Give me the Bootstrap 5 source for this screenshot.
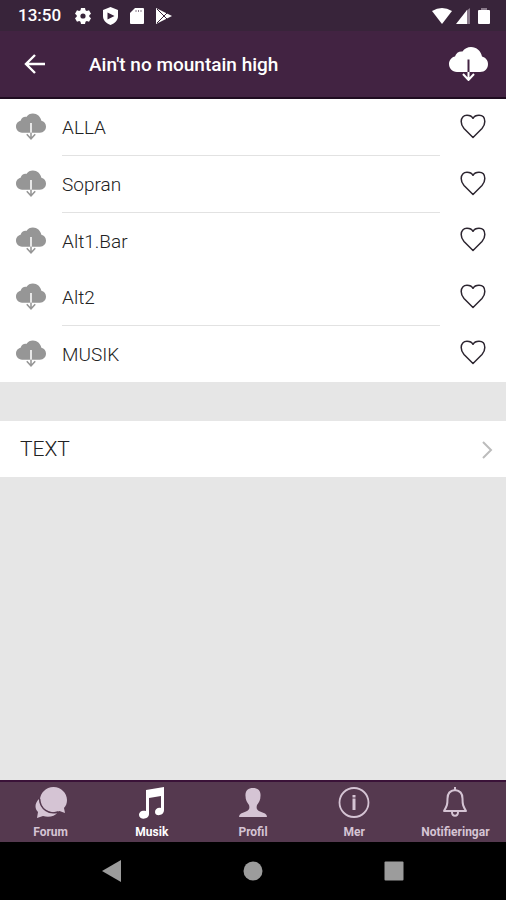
<!DOCTYPE html>
<html lang="sv">
<head>
<meta charset="utf-8">
<meta name="viewport" content="width=device-width, initial-scale=1">
<title>Ain't no mountain high</title>
<link href="https://cdn.jsdelivr.net/npm/bootstrap@5.3.0/dist/css/bootstrap.min.css" rel="stylesheet">
<style>
body { font-family: Roboto, "Liberation Sans", sans-serif; background: #e6e6e6; color: #222; }
svg { display: block; flex: none; }
button { border: 0; background: none; padding: 0; color: inherit; }
.status-bar { background: #38243a; height: 31px; padding: 0 16px 0 18px; font-size: 17px; font-weight: 500; }
.status-icons { gap: 12px; margin-left: 14px; }
.app-bar { background: #422342; height: 68px; padding: 0 18px 0 23px; border-bottom: 2px solid #1f0c20; }
.app-title { font-size: 19px; line-height: 24px; margin: 2px 0 0 42px; font-weight: 500; }
.voice { padding-left: 16px; padding-right: 18px; }
.voice-name { font-size: 19px; font-weight: 300; line-height: 24px; height: 54px; padding-top: 2px; margin-left: 16px; margin-right: 18px; box-sizing: content-box; }
.ruled { border-bottom: 1px solid #e2e2e2; }
.cloud-btn { color: #969696; --shaft: #fff; padding-bottom: 2px; }
.voice-heart { width: 30px; padding-bottom: 3px; }
.text-link { margin-top: 39px; height: 56px; padding: 2px 13px 0 20px; font-size: 21px; font-weight: 300; color: #222; }
.tab-bar { background: #55394f; height: 62px; border-top: 2px solid #3a1238; color: #d5c4d4; }
.tab-item { color: inherit; font-size: 12px; line-height: 14px; font-weight: 700; padding-top: 5px; flex: 1 1 0; min-width: 0; }
.tab-item svg { margin-bottom: 6px; }
.tab-item.current { color: #fff; }
.system-bar { background: #000; height: 58px; color: #9c9c9c; padding: 0 42px; }
.system-bar button { flex: 1 1 0; }
</style>
<script src="https://cdn.jsdelivr.net/npm/bootstrap@5.3.0/dist/js/bootstrap.bundle.min.js"></script>
</head>
<body>
<svg width="0" height="0" class="position-absolute" aria-hidden="true">
  <symbol id="cloud" viewBox="0 0 39 34">
    <path fill="currentColor" d="M8 25C3 25 0 21 0 17C0 13 3 10 6 9.500C7 6 10 4 13.500 4.500C15.500 1.500 18.500 0 22 0C27.500 0 32 4 33 9.500C36.500 10.500 39 13 39 17C39 21.500 36 25 31 25Z"/>
    <path fill="none" stroke="var(--shaft)" stroke-width="2" d="M19.500 12.500V25"/>
    <path fill="none" stroke="currentColor" stroke-width="2" d="M19.500 25V33M14 27L19.500 33L25 27"/>
  </symbol>
  <symbol id="heart" viewBox="0 0 26 25">
    <path fill="none" stroke="#2c2530" stroke-width="1.500" stroke-linejoin="round" d="M13 23.500L4 14.500C2 12.300 1.200 10 1.200 7.500C1.200 3.500 3.500 1.300 7 1.300C10 1.300 12 2.500 13 4.300C14 2.500 16 1.300 19 1.300C22.500 1.300 24.800 3.500 24.800 7.500C24.800 10 24 12.300 22 14.500Z"/>
  </symbol>
</svg>

<div class="d-flex flex-column min-vh-100">
  <div class="status-bar d-flex align-items-center text-white">
    <span>13:50</span>
    <div class="status-icons d-flex align-items-center">
      <svg width="16" height="16" viewBox="0 0 16 16"><path fill="#fff" d="M6 0h4l.5 2.300 1.300.7L14 2.300l2 3.400L14.300 7.200v1.600L16 10.300l-2 3.400-2.200-.7-1.300.7L10 16H6l-.5-2.300-1.300-.7-2.200.7-2-3.400 1.700-1.500V7.200L0 5.700l2-3.400 2.200.7 1.300-.7Z"/><circle cx="8" cy="8" r="2.600" fill="#38243a"/></svg>
      <svg width="15" height="18" viewBox="0 0 15 18"><path fill="#fff" d="M7.500 0L15 3V9C15 13 12 16.500 7.500 18C3 16.500 0 13 0 9V3Z"/><path fill="#38243a" d="M4.500 5.500L11.500 9L4.500 12.500Z"/></svg>
      <svg width="14" height="16" viewBox="0 0 14 16"><path fill="#fff" d="M5 0H13Q14 0 14 1V15Q14 16 13 16H1Q0 16 0 15V5Z"/><path stroke="#8a7c8b" d="M6 2V4M8.500 2V4M11 2V4"/></svg>
      <svg width="16" height="16" viewBox="0 0 16 16"><path fill="#fff" d="M0 0L16 8L0 16Z"/><path fill="none" stroke="#38243a" d="M1 1L11 11M1 15L11 5"/></svg>
    </div>
    <svg class="ms-auto" width="20" height="16" viewBox="0 0 20 16"><path fill="#fff" d="M0 3Q10-3 20 3L10 16Z"/></svg>
    <svg class="ms-1" width="14" height="16" viewBox="0 0 14 16"><path fill="#8b7b8c" d="M10 3L14 0V16H10Z"/><path fill="#fff" d="M0 16L11 2V16Z"/></svg>
    <svg class="ms-2" width="12" height="16" viewBox="0 0 12 16"><path fill="#8b7b8c" d="M3 0H9V2H3Z"/><path fill="#fff" d="M1 2H11Q12 2 12 3V15Q12 16 11 16H1Q0 16 0 15V3Q0 2 1 2Z"/></svg>
  </div>

  <header class="app-bar d-flex align-items-center text-white">
    <button type="button" aria-label="Tillbaka"><svg width="24" height="22" viewBox="0 0 24 22"><path fill="none" stroke="#fff" stroke-width="2.400" d="M22 11H4M12 2L3 11L12 20"/></svg></button>
    <h1 class="app-title">Ain't no mountain high</h1>
    <button type="button" class="ms-auto" aria-label="Ladda ner alla"><svg width="39" height="34" style="--shaft:#422342"><use href="#cloud"/></svg></button>
  </header>

  <main class="flex-grow-1">
    <ul class="list-unstyled bg-white mb-0">
      <li class="voice d-flex align-items-center">
        <button type="button" class="cloud-btn" aria-label="Ladda ner ALLA"><svg width="30" height="27"><use href="#cloud"/></svg></button>
        <span class="voice-name ruled flex-grow-1 d-flex align-items-center">ALLA</span>
        <button type="button" class="voice-heart" aria-label="Favorit ALLA"><svg class="mx-auto" width="26" height="25"><use href="#heart"/></svg></button>
      </li>
      <li class="voice d-flex align-items-center">
        <button type="button" class="cloud-btn" aria-label="Ladda ner Sopran"><svg width="30" height="27"><use href="#cloud"/></svg></button>
        <span class="voice-name ruled flex-grow-1 d-flex align-items-center">Sopran</span>
        <button type="button" class="voice-heart" aria-label="Favorit Sopran"><svg class="mx-auto" width="26" height="25"><use href="#heart"/></svg></button>
      </li>
      <li class="voice d-flex align-items-center">
        <button type="button" class="cloud-btn" aria-label="Ladda ner Alt1.Bar"><svg width="30" height="27"><use href="#cloud"/></svg></button>
        <span class="voice-name flex-grow-1 d-flex align-items-center">Alt1.Bar</span>
        <button type="button" class="voice-heart" aria-label="Favorit Alt1.Bar"><svg class="mx-auto" width="26" height="25"><use href="#heart"/></svg></button>
      </li>
      <li class="voice d-flex align-items-center">
        <button type="button" class="cloud-btn" aria-label="Ladda ner Alt2"><svg width="30" height="27"><use href="#cloud"/></svg></button>
        <span class="voice-name ruled flex-grow-1 d-flex align-items-center">Alt2</span>
        <button type="button" class="voice-heart" aria-label="Favorit Alt2"><svg class="mx-auto" width="26" height="25"><use href="#heart"/></svg></button>
      </li>
      <li class="voice d-flex align-items-center">
        <button type="button" class="cloud-btn" aria-label="Ladda ner MUSIK"><svg width="30" height="27"><use href="#cloud"/></svg></button>
        <span class="voice-name flex-grow-1 d-flex align-items-center">MUSIK</span>
        <button type="button" class="voice-heart" aria-label="Favorit MUSIK"><svg class="mx-auto" width="26" height="25"><use href="#heart"/></svg></button>
      </li>
    </ul>
    <a href="#" class="text-link bg-white d-flex align-items-center justify-content-between text-decoration-none">
      <span>TEXT</span>
      <svg width="12" height="18" viewBox="0 0 12 18"><path fill="none" stroke="#bcbcbc" stroke-width="2" d="M2 1L10 9L2 17"/></svg>
    </a>
  </main>

  <nav class="tab-bar d-flex text-center">
    <a href="#" class="tab-item d-flex flex-column align-items-center text-decoration-none"><svg width="32" height="32" viewBox="0 0 32 32"><path fill="currentColor" d="M4 12C-1 17 0 22 3 25L2 31L8 29C14 31 20 29 22 26C13 27 5 21 4 12Z"/><path fill="currentColor" d="M18.500 0C26 0 32 6 32 13C32 16 31 19 29 21L30 26L24.500 24C15 28 5 22 5 13C5 6 11 0 18.500 0Z"/><path fill="none" stroke="#55394f" stroke-width="1.400" d="M4.700 12C5 22 14 28 23 25"/></svg>Forum</a>
    <a href="#" class="tab-item current d-flex flex-column align-items-center text-decoration-none" aria-current="page"><svg width="32" height="32" viewBox="0 0 32 32"><path fill="currentColor" d="M10 3L28 0V23C28 29 19 30 19 25C19 22 22 20 25 21V9L13 11V27C13 33 3 33 3 28C3 24 7 23 10 24Z"/></svg>Musik</a>
    <a href="#" class="tab-item d-flex flex-column align-items-center text-decoration-none"><svg width="32" height="32" viewBox="0 0 32 32"><path fill="currentColor" d="M16 1C21 1 24 4 23.500 9C23.500 13 22 15 20 18C19 22 20 23 23 24.500L28 26.500Q30 27.500 30 30H2Q2 27.500 4 26.500L9 24.500C12 23 13 22 12 18C10 15 8.500 13 8.500 9C8 4 11 1 16 1Z"/></svg>Profil</a>
    <a href="#" class="tab-item d-flex flex-column align-items-center text-decoration-none"><svg width="32" height="32" viewBox="0 0 32 32"><circle cx="16" cy="15.500" r="14.500" fill="none" stroke="currentColor" stroke-width="1.800"/><path stroke="currentColor" stroke-width="3" d="M16 8V10.500M16 11.500V23"/></svg>Mer</a>
    <a href="#" class="tab-item d-flex flex-column align-items-center text-decoration-none"><svg width="32" height="32" viewBox="0 0 32 32"><path fill="none" stroke="currentColor" stroke-width="2" stroke-linejoin="round" d="M16 3C11 3.500 8.500 6.500 8.500 11.500C8.500 17.500 8 19 5 24H27C24 19 23.500 17.500 23.500 11.500C23.500 6.500 21 3.500 16 3ZM13 25C13 30 19 30 19 25M16 0V3"/></svg>Notifieringar</a>
  </nav>

  <div class="system-bar d-flex align-items-center">
    <button type="button" aria-label="Bakåt"><svg class="mx-auto" width="20" height="22" viewBox="0 0 20 22"><path fill="currentColor" d="M0 11L19 0V22Z"/></svg></button>
    <button type="button" aria-label="Hem"><svg class="mx-auto" width="20" height="20" viewBox="0 0 20 20"><circle cx="10" cy="10" r="9.500" fill="currentColor"/></svg></button>
    <button type="button" aria-label="Översikt"><svg class="mx-auto" width="20" height="20" viewBox="0 0 20 20"><rect width="19" height="19" x=".5" y=".5" rx="1" fill="currentColor"/></svg></button>
  </div>
</div>
</body>
</html>
